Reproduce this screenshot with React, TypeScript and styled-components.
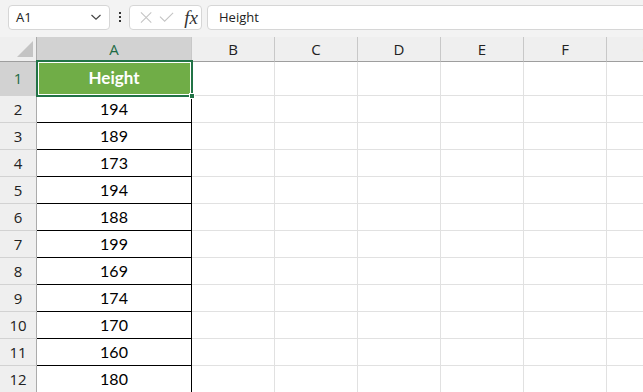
import React from "react";
import styled, { createGlobalStyle } from "styled-components";

const GlobalStyle = createGlobalStyle`
  html, body {
    margin: 0;
    padding: 0;
    background: #ffffff;
    overflow: hidden;
  }
  * {
    box-sizing: border-box;
  }
`;

const COLUMNS = ["A", "B", "C", "D", "E", "F", "G"];
const HEIGHTS = [194, 189, 173, 194, 188, 199, 169, 174, 170, 160, 180];

export default function App() {
  return (
    <>
      <GlobalStyle />
      <Page>
        <Toolbar>
          <NameBox>
            <span>A1</span>
            <svg width="12" height="8" viewBox="0 0 12 8">
              <path d="M1.5 2 L6 6.2 L10.5 2" fill="none" stroke="#444" strokeWidth="1.2" />
            </svg>
          </NameBox>
          <Dots>
            <i />
            <i />
            <i />
          </Dots>
          <FormulaButtons>
            <svg width="13" height="13" viewBox="0 0 13 13">
              <path d="M1 1 L12 12 M12 1 L1 12" stroke="#c4c4c4" strokeWidth="1.1" />
            </svg>
            <svg width="16" height="12" viewBox="0 0 16 12">
              <path d="M1 5.5 L6 10.5 L15 1.5" fill="none" stroke="#c4c4c4" strokeWidth="1.1" />
            </svg>
            <Fx>fx</Fx>
          </FormulaButtons>
          <FormulaInput>Height</FormulaInput>
        </Toolbar>

        <Grid>
          <Corner>
            <svg width="16" height="16" viewBox="0 0 16 16">
              <path d="M16 0 L16 16 L0 16 Z" fill="#c4c4c4" />
            </svg>
          </Corner>
          {COLUMNS.map((c) => (
            <ColHeader key={c} $selected={c === "A"}>
              {c}
            </ColHeader>
          ))}

          <RowHeader $selected>1</RowHeader>
          <TitleCell>
            Height
            <Selection>
              <FillHandle />
            </Selection>
          </TitleCell>
          {COLUMNS.slice(1).map((c) => (
            <Cell key={c} />
          ))}

          {HEIGHTS.map((h, i) => (
            <React.Fragment key={i}>
              <RowHeader>{i + 2}</RowHeader>
              <Cell $boxed>{h}</Cell>
              {COLUMNS.slice(1).map((c) => (
                <Cell key={c} />
              ))}
            </React.Fragment>
          ))}
        </Grid>
      </Page>
    </>
  );
}

const Page = styled.div`
  width: 643px;
  height: 392px;
  overflow: hidden;
  background: #ffffff;
`;

const Toolbar = styled.div`
  display: flex;
  align-items: center;
  height: 37px;
  padding: 0 0 3px 8px;
  background: #f3f3f3;
  font-family: "Open Sans", "Noto Sans", sans-serif;
  font-size: 13px;
  color: #222;
`;

const NameBox = styled.div`
  display: flex;
  align-items: center;
  justify-content: space-between;
  width: 102px;
  height: 25px;
  padding: 0 7px 0 7px;
  background: #ffffff;
  border: 1px solid #d6d6d6;
  border-radius: 4px;
`;

const Dots = styled.div`
  display: flex;
  flex-direction: column;
  gap: 2px;
  margin: 0 8px 0 9px;

  i {
    display: block;
    width: 2px;
    height: 2px;
    background: #333;
  }
`;

const FormulaButtons = styled.div`
  display: flex;
  align-items: center;
  gap: 7px;
  width: 73px;
  height: 25px;
  padding: 0 3px 0 10px;
  background: #ffffff;
  border: 1px solid #d6d6d6;
  border-radius: 4px;
`;

const Fx = styled.span`
  margin-left: 3px;
  font-family: "Liberation Serif", "DejaVu Serif", serif;
  font-style: italic;
  font-size: 19px;
  line-height: 1;
  color: #333;
`;

const FormulaInput = styled.div`
  display: flex;
  align-items: center;
  flex: 1;
  height: 25px;
  margin-left: 5px;
  margin-right: -10px;
  padding-left: 11px;
  background: #ffffff;
  border: 1px solid #d6d6d6;
  border-radius: 4px;
`;

const Grid = styled.div`
  display: grid;
  grid-template-columns: 37px 155px repeat(6, 83px);
  grid-template-rows: 25px 34px repeat(11, 27px);
  font-family: "Lato", "Open Sans", sans-serif;
  font-size: 16px;
  color: #000;
`;

const Corner = styled.div`
  display: flex;
  align-items: flex-end;
  justify-content: flex-end;
  padding: 0 3px 4px 0;
  background: #efefef;
  border-right: 1px solid #ababab;
  border-bottom: 1px solid #9e9e9e;
`;

const ColHeader = styled.div<{ $selected?: boolean }>`
  display: flex;
  align-items: center;
  justify-content: center;
  font-family: "Open Sans", "Noto Sans", sans-serif;
  font-size: 15px;
  background: ${(p) => (p.$selected ? "#d2d2d2" : "#efefef")};
  color: ${(p) => (p.$selected ? "#1d6b45" : "#222")};
  border-right: 1px solid #c8c8c8;
  border-bottom: 1px solid #9e9e9e;
`;

const RowHeader = styled.div<{ $selected?: boolean }>`
  display: flex;
  align-items: center;
  justify-content: center;
  padding-bottom: 1px;
  font-family: "Open Sans", "Noto Sans", sans-serif;
  font-size: 15px;
  background: ${(p) => (p.$selected ? "#d2d2d2" : "#efefef")};
  color: ${(p) => (p.$selected ? "#1d6b45" : "#222")};
  border-right: 1px solid #ababab;
  border-bottom: 1px solid #d2d2d2;
`;

const Cell = styled.div<{ $boxed?: boolean }>`
  display: flex;
  align-items: center;
  justify-content: center;
  padding-bottom: 2px;
  border-right: 1px solid ${(p) => (p.$boxed ? "#000" : "#e1e1e1")};
  border-bottom: 1px solid ${(p) => (p.$boxed ? "#000" : "#e1e1e1")};
`;

const TitleCell = styled.div`
  position: relative;
  display: flex;
  align-items: center;
  justify-content: center;
  padding-bottom: 3px;
  background: #70ad47;
  color: #ffffff;
  font-size: 17px;
  font-weight: 700;
  border-right: 1px solid #000;
  border-bottom: 1px solid #000;
`;

const Selection = styled.div`
  position: absolute;
  top: -2px;
  left: -1px;
  right: -2px;
  bottom: -2px;
  border: 2px solid #217346;
  box-shadow: inset 0 0 0 1px #ffffff;
`;

const FillHandle = styled.div`
  position: absolute;
  right: -4px;
  bottom: -4px;
  width: 6px;
  height: 6px;
  background: #217346;
  border: 1px solid #ffffff;
`;
